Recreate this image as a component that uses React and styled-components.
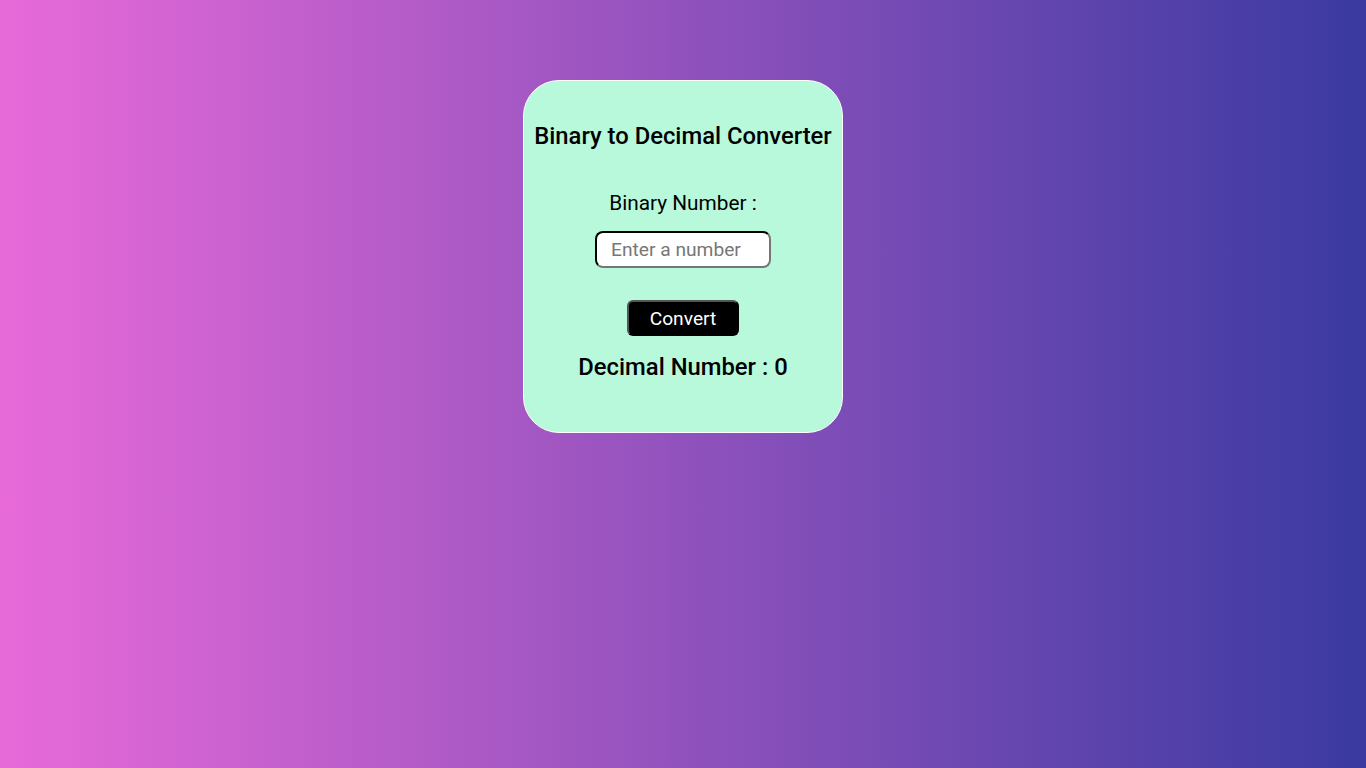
import React, { useState } from 'react';
import styled, { createGlobalStyle } from 'styled-components';

const GlobalStyle = createGlobalStyle`
  html, body {
    margin: 0;
    padding: 0;
    height: 100%;
  }
  body {
    font-family: Roboto, "Liberation Sans", sans-serif;
    background: linear-gradient(to right, #e86ad9, #3a3aa1);
    min-height: 100vh;
  }
`;

const Page = styled.div`
  min-height: 100vh;
  display: flex;
  justify-content: center;
  align-items: flex-start;
  padding-top: 80px;
  box-sizing: border-box;
`;

const Card = styled.div`
  width: 320px;
  box-sizing: border-box;
  background: #b9f9db;
  border: 1px solid #ffffff;
  border-radius: 36px;
  padding: 40px 0 51px;
  display: flex;
  flex-direction: column;
  align-items: center;
  text-align: center;
`;

const Title = styled.h2`
  margin: 0;
  font-size: 23.8px;
  font-weight: 500;
  color: #000;
  line-height: 30px;
`;

const Label = styled.label`
  margin-top: 40px;
  font-size: 20.8px;
  line-height: 24px;
  color: #000;
`;

const Input = styled.input`
  margin-top: 16px;
  width: 176px;
  height: 37px;
  box-sizing: border-box;
  border: 2px inset #767676;
  border-top-color: #222;
  border-left-color: #222;
  border-radius: 8px;
  background: #fff;
  padding: 0 14px;
  font-family: inherit;
  font-size: 19.2px;
  color: #000;
  outline: none;

  &::placeholder {
    color: #777;
  }
`;

const Button = styled.button`
  margin-top: 32px;
  width: 112px;
  height: 36px;
  box-sizing: border-box;
  background: #000;
  color: #fff;
  border: 2px outset #555;
  border-radius: 6px;
  font-family: inherit;
  font-size: 19.2px;
  cursor: pointer;
`;

const Result = styled.h3`
  margin: 17px 0 0;
  font-size: 23.8px;
  font-weight: 500;
  line-height: 28px;
  color: #000;
`;

export default function App() {
  const [binary, setBinary] = useState('');
  const [decimal, setDecimal] = useState(0);

  const convert = () => {
    if (/^[01]+$/.test(binary)) setDecimal(parseInt(binary, 2));
    else setDecimal(0);
  };

  return (
    <>
      <GlobalStyle />
      <Page>
        <Card>
          <Title>Binary to Decimal Converter</Title>
          <Label htmlFor="binary">Binary Number :</Label>
          <Input
            id="binary"
            type="text"
            placeholder="Enter a number"
            value={binary}
            onChange={(e) => setBinary(e.target.value)}
          />
          <Button onClick={convert}>Convert</Button>
          <Result>Decimal Number : {decimal}</Result>
        </Card>
      </Page>
    </>
  );
}
